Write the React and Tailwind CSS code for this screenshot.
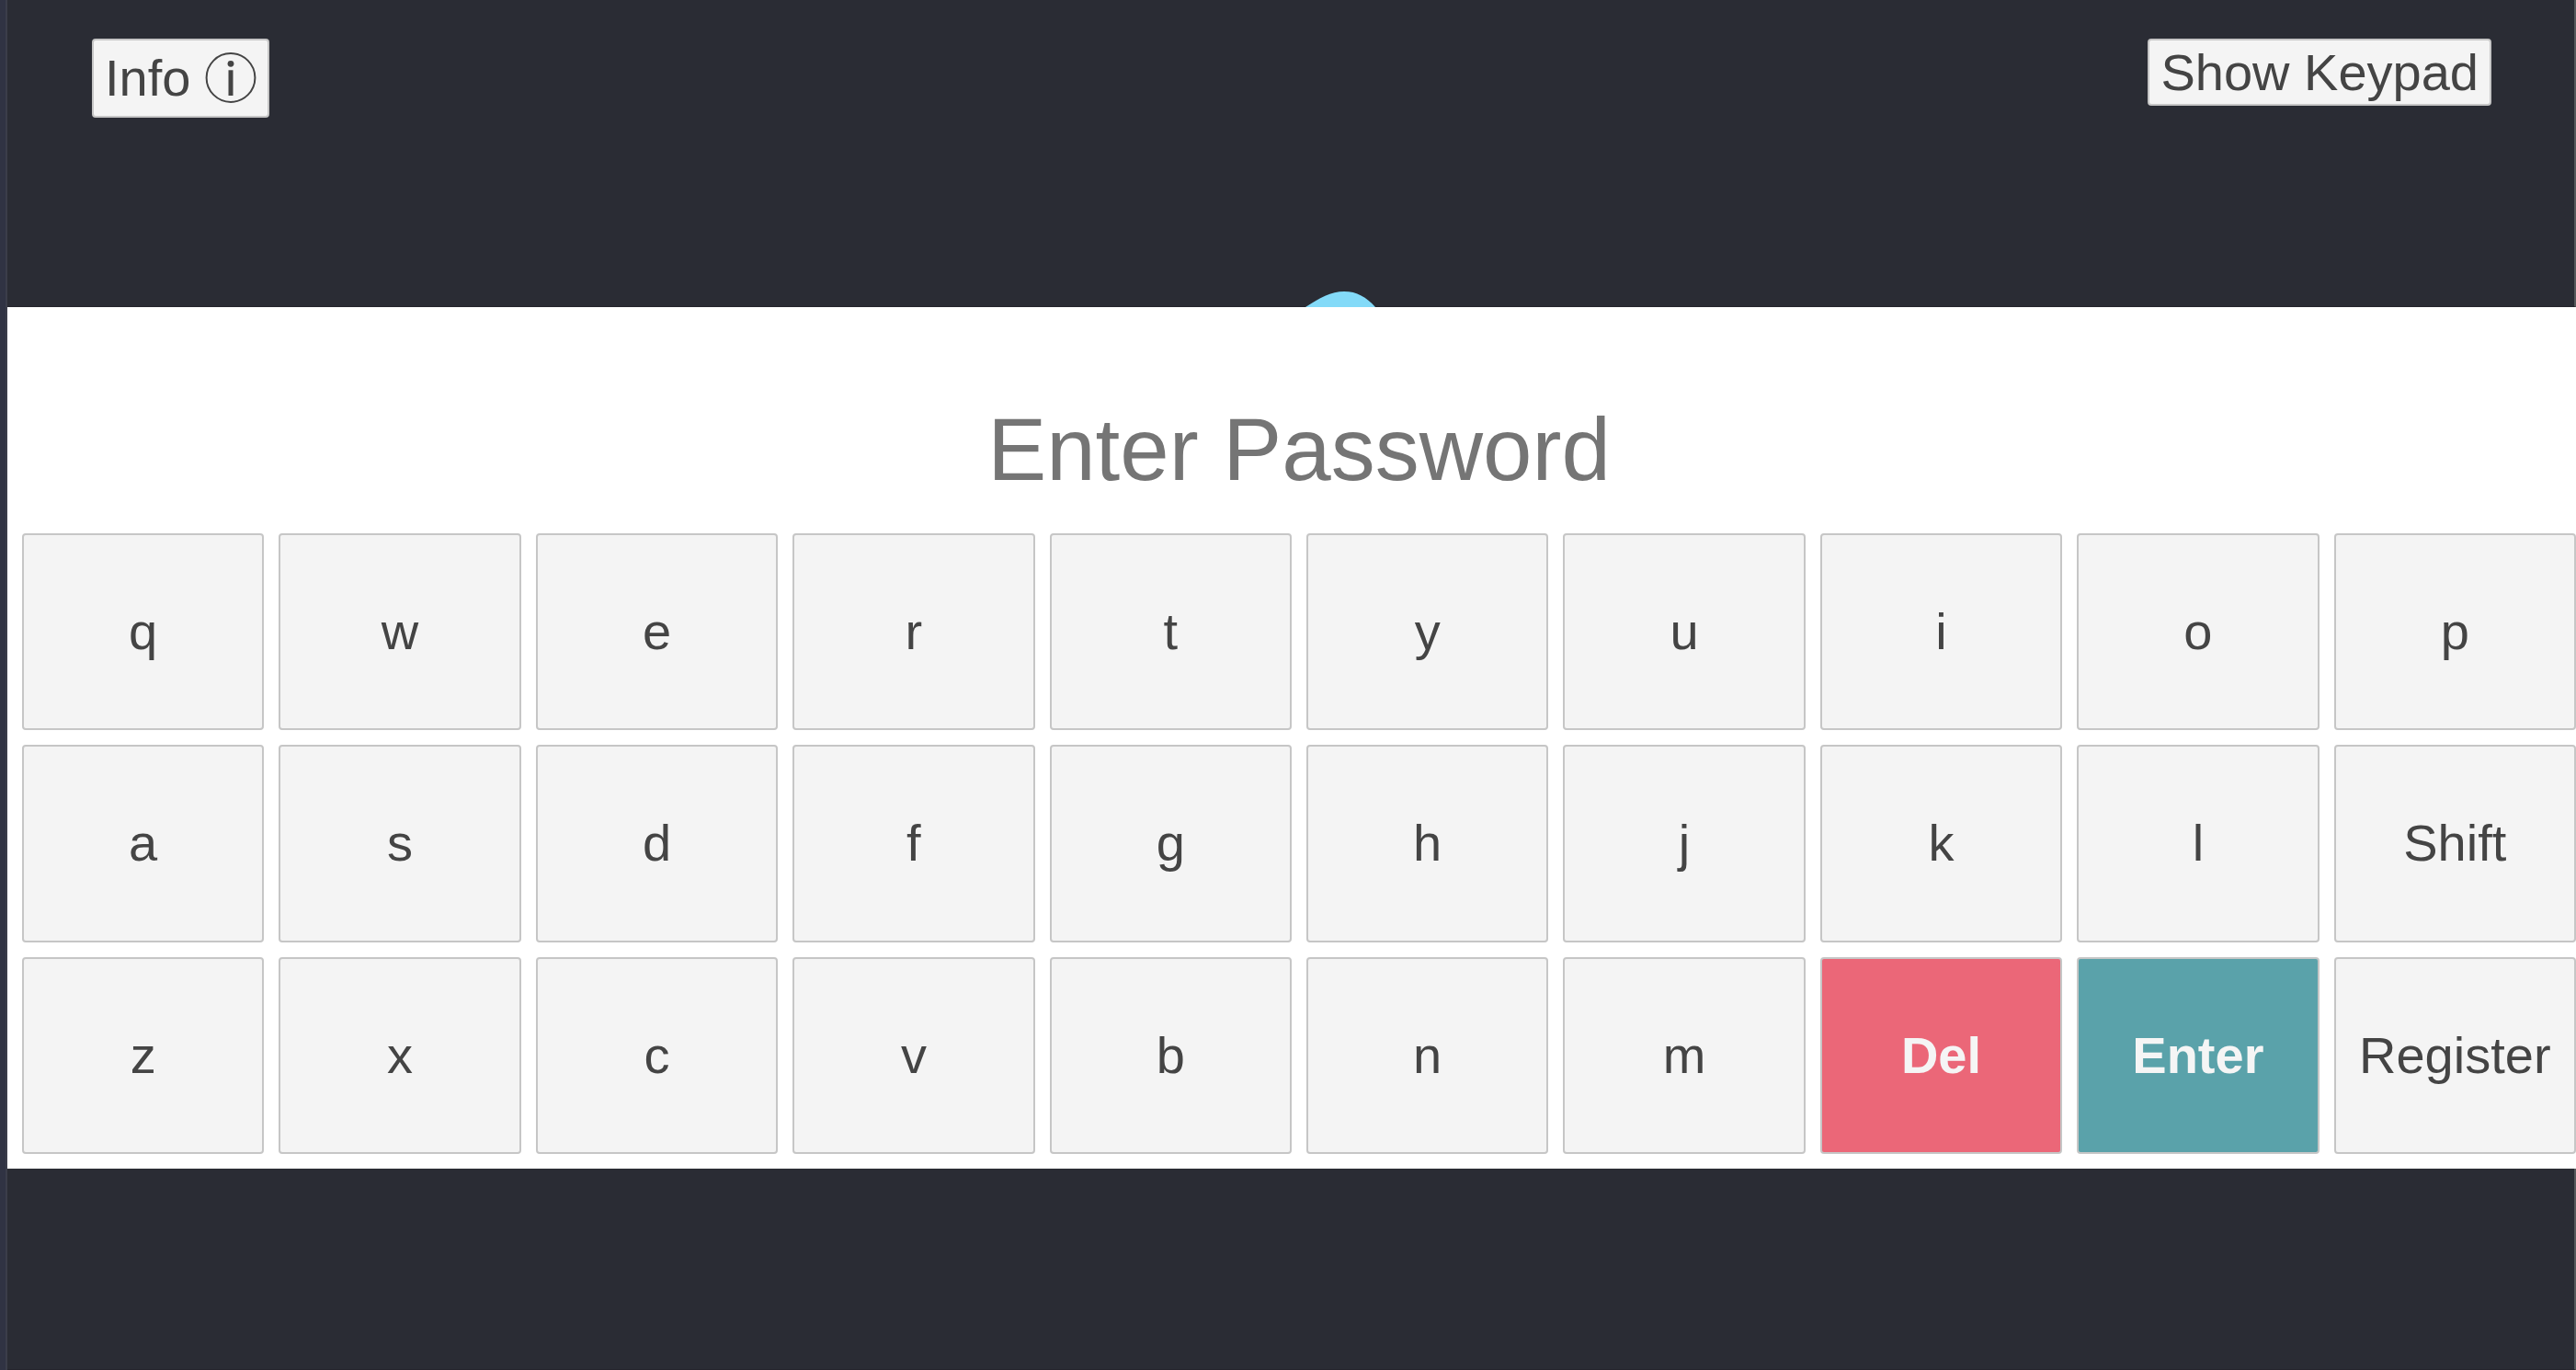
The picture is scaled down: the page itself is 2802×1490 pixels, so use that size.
import { useState } from "react";

const ROWS = [
  ["q", "w", "e", "r", "t", "y", "u", "i", "o", "p"],
  ["a", "s", "d", "f", "g", "h", "j", "k", "l", "Shift"],
  ["z", "x", "c", "v", "b", "n", "m", "Del", "Enter", "Register"],
];

const KEY_STYLES = {
  Del: "bg-[#eb6778] text-[#f5f5f5] font-bold",
  Enter: "bg-[#5aa2aa] text-[#f5f5f5] font-bold",
};

function InfoIcon() {
  return (
    <svg className="size-14 shrink-0" viewBox="0 0 56 56" aria-hidden="true">
      <circle cx="28" cy="27.5" r="26.4" fill="none" stroke="currentColor" strokeWidth="2" />
      <circle cx="28" cy="12.3" r="3.4" fill="currentColor" />
      <rect x="25.5" y="19.3" width="5" height="27.7" fill="currentColor" />
    </svg>
  );
}

function Key({ label, onPress }) {
  return (
    <button
      type="button"
      onClick={() => onPress(label)}
      className={`min-w-0 rounded border-2 border-[#c6c6c6] text-center ${
        KEY_STYLES[label] ?? "bg-[#f4f4f4] text-[#444444]"
      }`}
    >
      {label}
    </button>
  );
}

export default function App() {
  const [password, setPassword] = useState("");
  const [shift, setShift] = useState(false);

  const press = (label) => {
    if (label === "Shift") setShift(!shift);
    else if (label === "Del") setPassword(password.slice(0, -1));
    else if (label.length === 1) setPassword(password + (shift ? label.toUpperCase() : label));
  };

  return (
    <div className="flex min-h-screen bg-[#2a2c34] font-['Liberation_Sans',Arial,sans-serif] text-[56px]">
      <div className="w-2 shrink-0 border-r-2 border-[#3b3d4a] bg-[#303343]" />
      <main className="flex min-w-0 flex-1 flex-col">
        <header className="relative flex h-[334px] items-start justify-between border-r-2 border-b border-r-[#55585a] border-b-[#25242c] pt-[42px] pr-[90px] pl-[92px]">
          <button
            type="button"
            className="flex h-[86px] items-center gap-4 rounded border-2 border-[#c6c6c6] bg-[#f4f4f4] px-3 text-[#444444]"
          >
            Info
            <InfoIcon />
          </button>
          <button
            type="button"
            className="flex h-[73px] items-center rounded border-2 border-[#c6c6c6] bg-[#f4f4f4] px-3 text-[#444444]"
          >
            Show Keypad
          </button>
          <svg
            className="absolute -bottom-px left-1/2 ml-4 h-[17px] w-[76px]"
            viewBox="0 0 76 17"
            aria-hidden="true"
          >
            <path d="M0 17C15 7 28 0 42 0C56 0 66 6 76 17Z" fill="#83daf8" />
          </svg>
        </header>
        <section className="flex flex-col gap-4 bg-white pt-20 pb-4 pl-4">
          <input
            type="password"
            aria-label="Password"
            placeholder="Enter Password"
            value={password}
            onChange={(e) => setPassword(e.target.value)}
            className="h-[150px] w-full text-center text-8xl text-[#444444] outline-none placeholder:text-[#757575]"
          />
          <div className="grid h-[675px] grid-cols-10 grid-rows-3 gap-4">
            {ROWS.flat().map((label) => (
              <Key key={label} label={label} onPress={press} />
            ))}
          </div>
        </section>
        <footer className="flex-1 border-r-2 border-b border-r-[#55585a] border-b-[#25242c]" />
      </main>
    </div>
  );
}
